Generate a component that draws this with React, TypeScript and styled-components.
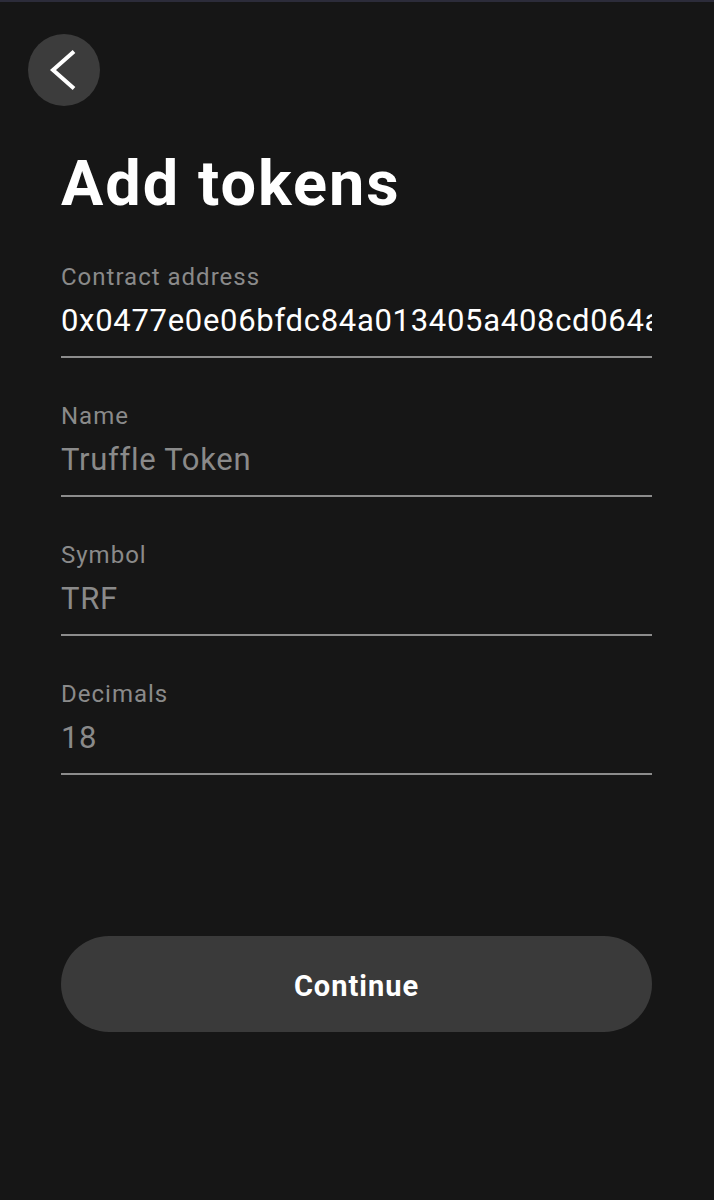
import React from "react";
import styled, { createGlobalStyle } from "styled-components";

const Global = createGlobalStyle`
  html, body { margin: 0; padding: 0; background: #161616; }
  body { font-family: Roboto, "Noto Sans", sans-serif; }
  * { box-sizing: border-box; }
`;

const Page = styled.div`
  min-height: 1200px;
  background: #161616;
  border-top: 2px solid #2c2c3a;
  display: flex;
  flex-direction: column;
`;

const TopBar = styled.div`
  padding: 32px 0 0 28px;
  display: flex;
`;

const BackButton = styled.button`
  width: 72px;
  height: 72px;
  border-radius: 50%;
  border: none;
  background: #3c3c3c;
  padding: 0;
  display: flex;
  align-items: center;
  justify-content: center;
  cursor: pointer;
`;

const Content = styled.div`
  padding: 0 62px 0 61px;
  display: flex;
  flex-direction: column;
`;

const Title = styled.h1`
  margin: 46px 0 0;
  font-family: Roboto, sans-serif;
  font-weight: 700;
  font-size: 63px;
  line-height: 63px;
  color: #ffffff;
  letter-spacing: 2px;
`;

const Form = styled.div`
  margin-top: 48px;
  display: flex;
  flex-direction: column;
  gap: 44px;
`;

const Field = styled.label`
  display: flex;
  flex-direction: column;
  border-bottom: 2px solid #8c8c8c;
  padding-bottom: 15px;
`;

const Label = styled.span`
  font-size: 24px;
  line-height: 28px;
  color: #8a8a8a;
  font-weight: 400;
  letter-spacing: 1px;
`;

const Input = styled.input`
  margin-top: 10px;
  height: 40px;
  padding: 0;
  border: none;
  outline: none;
  background: transparent;
  font-family: Roboto, sans-serif;
  font-size: 31px;
  line-height: 40px;
  letter-spacing: 0.7px;
  color: #ffffff;
  width: 100%;
  &::placeholder {
    color: #8a8a8a;
    opacity: 1;
  }
`;

const Continue = styled.button`
  margin-top: 161px;
  height: 96px;
  border-radius: 48px;
  border: none;
  background: #3a3a3a;
  color: #ffffff;
  font-family: Roboto, sans-serif;
  font-weight: 700;
  font-size: 29px;
  letter-spacing: 1px;
  padding-top: 5px;
  cursor: pointer;
`;

const fields = [
  { label: "Contract address", value: "0x0477e0e06bfdc84a013405a408cd064a", placeholder: "" },
  { label: "Name", value: "", placeholder: "Truffle Token" },
  { label: "Symbol", value: "", placeholder: "TRF" },
  { label: "Decimals", value: "", placeholder: "18" },
];

export default function App() {
  return (
    <>
      <Global />
      <Page>
        <TopBar>
          <BackButton aria-label="Back">
            <svg width="72" height="72" viewBox="0 0 72 72">
              <polyline
                points="46,17.5 25,36 46,54.5"
                fill="none"
                stroke="#ffffff"
                strokeWidth="4"
                strokeLinecap="butt"
                strokeLinejoin="miter"
              />
            </svg>
          </BackButton>
        </TopBar>
        <Content>
          <Title>Add tokens</Title>
          <Form>
            {fields.map((f) => (
              <Field key={f.label}>
                <Label>{f.label}</Label>
                <Input
                  readOnly
                  defaultValue={f.value}
                  placeholder={f.placeholder}
                />
              </Field>
            ))}
          </Form>
          <Continue>Continue</Continue>
        </Content>
      </Page>
    </>
  );
}
